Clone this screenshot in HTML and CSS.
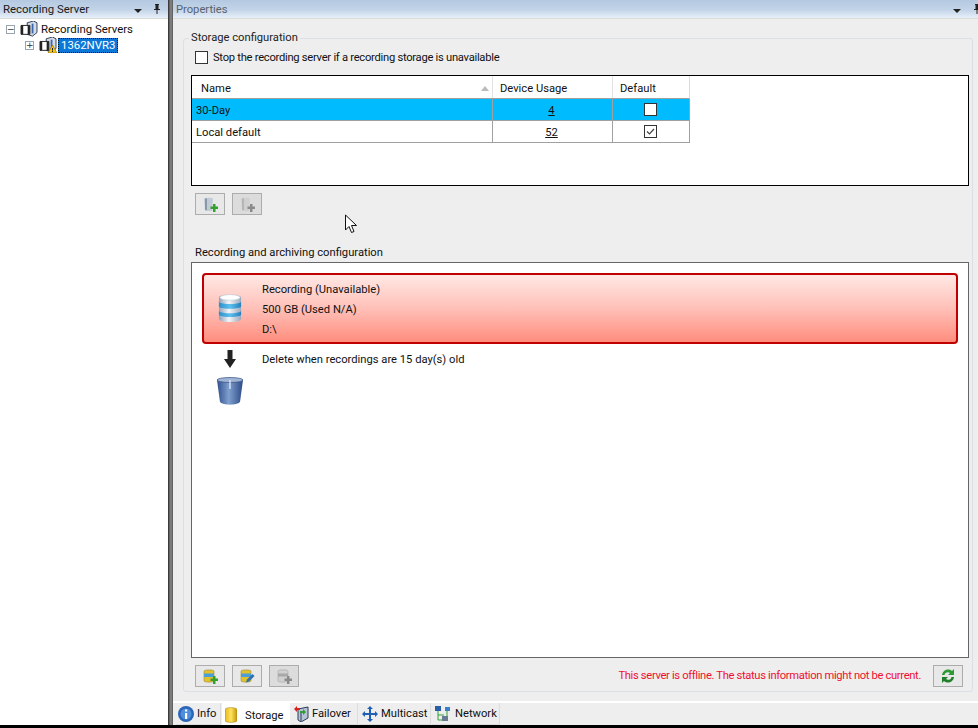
FILE: index.html
```html
<!DOCTYPE html>
<html lang="en">
<head>
<meta charset="utf-8">
<title>Recording Server</title>
<link rel="stylesheet" href="styles.css">
</head>
<body>
<svg class="defs" width="0" height="0" aria-hidden="true">
  <defs>
    <linearGradient id="can" x1="0" x2="1" y1="0" y2="0"><stop offset="0" stop-color="#8fa0b8"/><stop offset=".45" stop-color="#f4f6f8"/><stop offset="1" stop-color="#9aa8bc"/></linearGradient>
    <linearGradient id="band" x1="0" x2="1" y1="0" y2="0"><stop offset="0" stop-color="#2a8fc8"/><stop offset=".5" stop-color="#5cc0ee"/><stop offset="1" stop-color="#2680bc"/></linearGradient>
    <linearGradient id="bin" x1="0" x2="1" y1="0" y2="0"><stop offset="0" stop-color="#2f4f8c"/><stop offset=".45" stop-color="#7f9fcf"/><stop offset="1" stop-color="#2c4a84"/></linearGradient>
    <linearGradient id="gold" x1="0" x2="1" y1="0" y2="0"><stop offset="0" stop-color="#e8b820"/><stop offset=".5" stop-color="#ffe45a"/><stop offset="1" stop-color="#c8960c"/></linearGradient>
    <symbol id="pin" viewBox="0 0 8 10"><path d="M2 0h4v1H5.500v4H7v1H4.500v4h-1V6H1V5h1.500V1H2z" fill="#222"/></symbol>
    <symbol id="server" viewBox="0 0 20 18"><path d="M8 2l7-2 4 2v11l-5 4-6-2z" fill="#d4dbe6" stroke="#23304a"/><path d="M1 5h10v10H1z" fill="#fff" stroke="#111"/><path d="M1 5h2.500v10H1zM8.500 5H11v10H8.500z" fill="#222"/><path d="M14 3v11" stroke="#3a66b0" stroke-width="2"/></symbol>
  </defs>
</svg>
<div class="app">
  <aside class="left">
    <header class="titlebar">
      <span class="title-dark">Recording Server</span>
      <span class="bar-tools"><i class="caret"></i><svg class="pin"><use href="#pin"/></svg></span>
    </header>
    <div class="tree">
      <div class="tree-row">
        <span class="expander">−</span>
        <svg class="node-icon"><use href="#server"/></svg>
        <span>Recording Servers</span>
      </div>
      <div class="tree-row nested">
        <span class="expander">+</span>
        <span class="node-wrap">
          <svg class="node-icon"><use href="#server"/></svg>
          <svg class="warn" viewBox="0 0 9 8"><path d="M4.500 0L9 8H0z" fill="#f5c518" stroke="#8a6a00" stroke-width=".6"/><path d="M4 3h1v2.500H4zM4 6h1v1H4z" fill="#222"/></svg>
        </span>
        <span class="selected">1362NVR3</span>
      </div>
    </div>
  </aside>
  <div class="splitter"></div>
  <main class="right">
    <header class="titlebar">
      <span class="title-soft">Properties</span>
      <span class="bar-tools"><i class="caret"></i><svg class="pin"><use href="#pin"/></svg></span>
    </header>
    <div class="content">
      <fieldset class="group">
        <legend>Storage configuration</legend>
        <label class="stop"><span class="check"></span>Stop the recording server if a recording storage is unavailable</label>
        <div class="storage-list">
          <div class="grid-row grid-head">
            <div class="cell name-head">Name<i class="sort"></i></div>
            <div class="cell usage-head">Device Usage</div>
            <div class="cell default-head">Default</div>
          </div>
          <div class="grid-row selected-row">
            <div class="cell">30-Day</div>
            <div class="cell center"><u>4</u></div>
            <div class="cell center"><span class="cb"></span></div>
          </div>
          <div class="grid-row">
            <div class="cell">Local default</div>
            <div class="cell center"><u>52</u></div>
            <div class="cell center"><span class="cb"><svg viewBox="0 0 11 11"><path d="M2 5.500l2.500 2.500L9 3" fill="none" stroke="#444" stroke-width="1.200"/></svg></span></div>
          </div>
        </div>
        <div class="btn-row first-btns">
          <button class="btn">
            <svg viewBox="0 0 15 15"><path d="M1 1.500C1 .5 10 .5 10 1.500L9 14H2z" fill="#c3ccd6"/><path d="M3 1.500V13" stroke="#6c7c90" stroke-width="1.300"/><path d="M10 7h2.500v2.500H15V12h-2.500v3H10v-3H7.500V9.500H10z" fill="#35a030"/></svg>
          </button>
          <button class="btn off">
            <svg viewBox="0 0 15 15"><path d="M1 1.500C1 .5 10 .5 10 1.500L9 14H2z" fill="#d0d0d0"/><path d="M3 1.500V13" stroke="#a8a8a8" stroke-width="1.300"/><path d="M10 7h2.500v2.500H15V12h-2.500v3H10v-3H7.500V9.500H10z" fill="#8a8a8a"/></svg>
          </button>
        </div>
        <div class="section-label">Recording and archiving configuration</div>
        <div class="archive-box">
          <div class="rec-card">
            <svg class="db" viewBox="0 0 26 32">
              <path d="M1 4C1 0 25 0 25 4V27C25 32 1 32 1 27z" fill="url(#can)"/>
              <path d="M1 9C5 12 21 12 25 9V14C21 17 5 17 1 14zM1 19C5 22 21 22 25 19V23C21 26 5 26 1 23z" fill="url(#band)"/>
              <ellipse cx="13" cy="4" rx="11" ry="3" fill="#fff" stroke="#b8c4d0" stroke-width=".6"/>
            </svg>
            <div class="rec-text">
              <div>Recording (Unavailable)</div>
              <div>500 GB (Used N/A)</div>
              <div>D:\</div>
            </div>
          </div>
          <div class="delete-row">
            <div class="delete-icons">
              <svg class="arrow" viewBox="0 0 12 18"><path d="M3.500 0h5v9H12l-6 9-6-9h3.500z" fill="#222"/></svg>
              <svg class="bin" viewBox="0 0 28 28"><path d="M1 3h26l-3 22c-3 3.500-17 3.500-20 0z" fill="url(#bin)"/><ellipse cx="14" cy="3" rx="13" ry="2.500" fill="#9fb4d6" stroke="#33507f" stroke-width=".7"/><path d="M14 3v9" stroke="#dbe5f2" stroke-width="2" opacity=".7"/></svg>
            </div>
            <div class="delete-text">Delete when recordings are 15 day(s) old</div>
          </div>
        </div>
        <div class="footer-row">
          <button class="btn">
            <svg viewBox="0 0 15 15"><path d="M1 2C1 .5 11 .5 11 2V12c0 1.500-10 1.500-10 0z" fill="#e3c22e" stroke="#8a7a30" stroke-width=".5"/><path d="M1 4.500h10v3.500H1z" fill="#4a9fd8"/><path d="M10 7h2.500v2.500H15V12h-2.500v3H10v-3H7.500V9.500H10z" fill="#35a030"/></svg>
          </button>
          <button class="btn">
            <svg viewBox="0 0 15 15"><path d="M1 2C1 .5 11 .5 11 2V12c0 1.500-10 1.500-10 0z" fill="#e3c22e" stroke="#8a7a30" stroke-width=".5"/><path d="M1 4.500h10v3.500H1z" fill="#4a9fd8"/><path d="M6 13.500l1-3 5.500-5.500 2 2L9 12.500z" fill="#2e6fb0"/></svg>
          </button>
          <button class="btn off">
            <svg viewBox="0 0 15 15"><path d="M1 2C1 .5 11 .5 11 2V12c0 1.500-10 1.500-10 0z" fill="#d0d0d0" stroke="#999" stroke-width=".5"/><path d="M1 4.500h10v3H1z" fill="#a8a8a8"/><path d="M10 7h2.500v2.500H15V12h-2.500v3H10v-3H7.500V9.500H10z" fill="#8a8a8a"/></svg>
          </button>
          <span class="offline">This server is offline. The status information might not be current.</span>
          <button class="btn refresh">
            <svg viewBox="0 0 16 16"><path d="M2 7C2.500 3 6 1 9 1.500c1.500.2 2.500 1 3 1.500L14 1v6H8l2-2C8.500 3.500 5 4 4.500 7z" fill="#2f9a35"/><path d="M14 9c-.5 4-4 6-7 5.500-1.500-.2-2.500-1-3-1.500l-2 2V9h6l-2 2c1.500 1.500 5 1 5.500-2z" fill="#1f7f2a"/></svg>
          </button>
        </div>
      </fieldset>
    </div>
    <nav class="tabs">
      <div class="tab tab-info">
        <svg viewBox="0 0 16 16"><circle cx="8" cy="8" r="8" fill="#2c66b8"/><circle cx="8" cy="8" r="5.500" fill="#4d8fdc"/><path d="M7 7h2.200v6H7zM7 3.500h2.200v2H7z" fill="#fff"/></svg>
        Info
      </div>
      <div class="tab tab-storage active">
        <svg viewBox="0 0 12 16"><path d="M0 2.500C0 0 12 0 12 2.500V13.500C12 16 0 16 0 13.500z" fill="url(#gold)" stroke="#9a7a10" stroke-width=".5"/></svg>
        Storage
      </div>
      <div class="tab tab-failover">
        <svg viewBox="0 0 16 16"><path d="M4 3l10-2v11l-7 4-3-2z" fill="#b8c4d6" stroke="#2a3a5a"/><path d="M7 6v9" stroke="#2a3a5a"/><path d="M0 3l3-3v2h3v2H3v2z" fill="#d82020"/><path d="M12 6L9 3v2H6v2h3v2z" fill="#2fa030"/></svg>
        Failover
      </div>
      <div class="tab tab-multicast">
        <svg viewBox="0 0 16 16"><path d="M8 0l3 3H9v4h4V5l3 3-3 3V9H9v4h2l-3 3-3-3h2V9H3v2L0 8l3-3v2h4V3H5z" fill="#1f5fb4"/></svg>
        Multicast
      </div>
      <div class="tab tab-network">
        <svg viewBox="0 0 16 16"><path d="M3 5v9h6M3 9h6M12 5v6" fill="none" stroke="#2fa030"/><path d="M0 0h6v5H0z" fill="#2a5fa8"/><path d="M10 1h5v4h-5z" fill="#3a7fc8"/><path d="M7 10h6v5H7z" fill="#6a7a90"/></svg>
        Network
      </div>
    </nav>
  </main>
</div>
<svg class="cursor" viewBox="0 0 13 20"><path d="M1 1v15l3.500-3.500 2.500 6 2.500-1-2.500-6h5z" fill="#fff" stroke="#111"/></svg>
</body>
</html>
```

FILE: styles.css
```css
* { box-sizing: border-box; }
html, body { margin: 0; height: 728px; overflow: hidden; background: #000; }
body { font-family: Roboto, "Liberation Sans", sans-serif; font-size: 11.200px; color: #111; }
.defs { position: absolute; }
.app { display: flex; height: 725px; }
.left { width: 168px; flex: none; display: flex; flex-direction: column; background: #fff; }
.splitter { width: 5px; flex: none; background: linear-gradient(90deg, #222 0, #555 20%, #8a8a8a 60%, #555 100%); }
.right { flex: 1; min-width: 0; display: flex; flex-direction: column; background: #eee; }
.titlebar { height: 19px; flex: none; display: flex; align-items: center; justify-content: space-between; padding: 0 0 0 3px; background: linear-gradient(#b4c9e1, #c3d4e8 55%, #e8f0fa); border-bottom: 1px solid #dcdcd6; }
.title-dark { font-size: 11.400px; color: #1a1a1a; }
.title-soft { color: #59636e; }
.bar-tools { display: flex; align-items: center; gap: 11px; padding-right: 7px; }
.right .bar-tools { gap: 12px; padding-right: 0; margin-right: -3px; }
.caret { width: 0; height: 0; border: 4px solid transparent; border-top: 4px solid #222; border-bottom: 0; margin-top: 3px; }
.pin { width: 8px; height: 10px; }
.tree { padding: 2px 0 0 6px; }
.tree-row { height: 16px; display: flex; align-items: center; white-space: nowrap; font-size: 11.400px; }
.nested { padding-left: 19px; }
.expander { width: 9px; height: 9px; border: 1px solid #9aa4ae; font: 9px/7px "DejaVu Sans", sans-serif; text-align: center; color: #333; margin-right: 5px; flex: none; }
.node-icon { width: 18px; height: 16px; margin-right: 3px; flex: none; }
.node-wrap { position: relative; display: flex; }
.warn { position: absolute; right: 3px; bottom: 0; width: 9px; height: 8px; }
.selected { background: #0b78d7; color: #fff; outline: 1px dotted #111; outline-offset: -1px; padding: 0 3px; margin-left: -2px; height: 15px; line-height: 15px; }
.content { flex: 1; padding: 12px 5px 9px 10px; min-height: 0; border-bottom: 2px solid #fff; }
.group { height: 100%; margin: 0; padding: 0 3px 0 7px; border: 1px solid #d9e0e8; border-radius: 3px; }
.group legend { padding: 0 2px; margin-left: -2px; line-height: 14px; color: #222; }
.stop { display: flex; align-items: center; gap: 5px; height: 15px; margin: 5px 0 0 4px; letter-spacing: -.27px; }
.check { width: 13px; height: 13px; border: 1px solid #333; background: #fff; }
.storage-list { height: 111px; margin-top: 10px; border: 1px solid #000; background: #fff; }
.grid-row { display: grid; grid-template-columns: 301px 120px 77px; width: 498px; height: 22px; border-bottom: 1px solid #a0a0a0; border-right: 1px solid #a0a0a0; }
.grid-head { height: 23px; border-right: 1px solid #dcdcdc; }
.cell { display: flex; align-items: center; padding: 2px 0 0 4px; border-right: 1px solid #a0a0a0; position: relative; }
.cell:last-child { border-right: 0; }
.grid-head .cell { border-right-color: #e2e2e2; padding-left: 7px; }
.grid-head .name-head { padding-left: 9px; }
.center { justify-content: center; padding: 0 2px 0 0; }
.center u { padding-top: 2px; }
.sort { position: absolute; right: 3px; top: 10px; width: 0; height: 0; border: 4px solid transparent; border-bottom: 5px solid #bbb; border-top: 0; }
.selected-row { background: #00bcff; }
.cb { width: 13px; height: 13px; border: 1px solid #333; background: #fff; display: block; }
.cb svg { display: block; width: 11px; height: 11px; }
.btn-row { display: flex; gap: 7px; margin: 7px 0 0 4px; }
.btn { width: 30px; height: 22px; padding: 0; display: flex; align-items: center; justify-content: center; background: #e8e8e8; border: 1px solid #acacac; }
.btn svg { width: 15px; height: 15px; }
.off { background: #dcdcdc; }
.section-label { margin-top: 31px; padding-left: 4px; line-height: 14px; }
.archive-box { height: 396px; margin-top: 2px; padding: 10px; border: 1px solid #666; background: #fff; }
.rec-card { height: 71px; display: flex; align-items: center; border: 2px solid #c00000; border-radius: 4px; background: linear-gradient(#ffe8e4, #ffc0b8 50%, #ff8d7d); }
.db { width: 24px; height: 31px; margin: 0 20px 0 14px; }
.rec-text { line-height: 20px; padding-top: 2px; }
.delete-row { display: flex; }
.delete-icons { width: 56px; display: flex; flex-direction: column; align-items: center; padding: 6px 0 0 0; flex: none; }
.arrow { width: 12px; height: 18px; }
.bin { width: 28px; height: 28px; margin-top: 9px; }
.delete-text { margin-top: 8px; padding-left: 4px; line-height: 16px; }
.footer-row { display: flex; align-items: center; gap: 7px; margin: 7px 0 0 4px; }
.offline { margin-left: auto; margin-right: 5px; padding-bottom: 2px; color: #f01030; letter-spacing: -.34px; }
.refresh { margin-right: 6px; }
.refresh svg { width: 16px; height: 16px; }
.tabs { height: 22px; flex: none; display: flex; padding-left: 3px; gap: 1px; background: #eee; }
.tab { display: flex; align-items: center; padding: 0 0 0 3px; border-right: 1px solid #dcdcdc; border-bottom: 1px solid #dcdcdc; white-space: nowrap; }
.tab svg { width: 16px; height: 16px; flex: none; }
.active { background: #fff; border: 0; padding: 3px 0 0 3px; }
.active svg { width: 12px; height: 16px; margin-top: -2px; }
.tab-info { width: 45px; padding-left: 2px; gap: 3px; }
.tab-storage { width: 68px; gap: 8px; }
.tab-failover { width: 67px; gap: 2px; }
.tab-multicast { width: 72px; gap: 3px; }
.tab-network { width: 68px; gap: 4px; }
.cursor { position: absolute; left: 344px; top: 214px; width: 14px; height: 20px; }
```
